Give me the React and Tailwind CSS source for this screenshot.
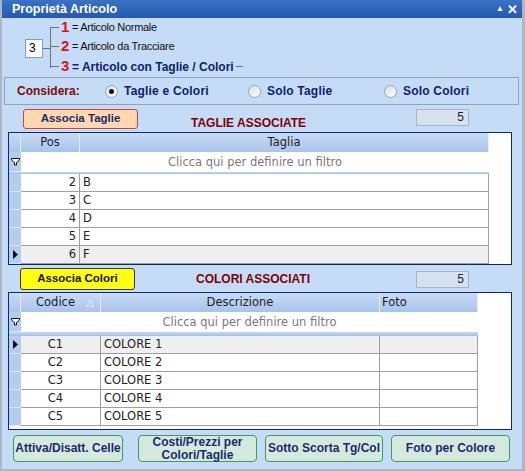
import React from 'react';

const Radio = ({ checked, label }) => (
  <div className="flex items-center gap-[6px]">
    <div className="w-[13px] h-[13px] rounded-full border border-[#9aa6b4] bg-gradient-to-br from-[#d8dde3] to-white flex items-center justify-center">
      {checked && <div className="w-[5px] h-[5px] rounded-full bg-[#111]" />}
    </div>
    <span className="text-[12px] font-bold text-[#13206a] tracking-[0.2px]">{label}</span>
  </div>
);

const Counter = ({ value }) => (
  <div className="w-[53px] h-[17px] bg-[#d6e1ee] border border-[#a6b6c8] text-right pr-[4px] text-[12px] leading-[15px] text-[#222]">
    {value}
  </div>
);

const Funnel = () => (
  <svg width="9" height="9" viewBox="0 0 9 9">
    <path d="M0.5 1.5 H8.5 V3 L5.5 5.5 V8 H3.5 V5.5 L0.5 3 Z" fill="white" stroke="#111" strokeWidth="1" />
  </svg>
);

const Arrow = () => (
  <svg width="5" height="9" viewBox="0 0 5 9">
    <path d="M0 0 L5 4.5 L0 9 Z" fill="#111" />
  </svg>
);

const Grid = ({ columns, rows, selected, height }) => {
  const used = columns.reduce((a, c) => a + c.w, 12);
  return (
    <div className="mx-[6px] w-[504px] border border-[#0b2a6e] bg-white flex flex-col" style={{ height }}>
      {/* header */}
      <div className="flex h-[19px]">
        <div className="w-[12px] bg-gradient-to-b from-[#c8dbf5] to-[#a8c4ec] border-r border-[#e4edf9]" />
        {columns.map((c, i) => (
          <div
            key={i}
            className={`relative bg-gradient-to-b from-[#c8dbf5] to-[#a8c4ec] border-r border-[#e4edf9] text-[11.5px] leading-[19px] text-[#1d1d1d] ${c.hAlign}`}
            style={{ width: c.w }}
          >
            {c.title}
            {c.sort && <span className="absolute right-[6px] top-0 text-[10px] text-[#f2f6fc]">△</span>}
          </div>
        ))}
      </div>
      {/* filter row */}
      <div className="flex h-[20px]">
        <div className="w-[12px] bg-[#b5cdf0] flex items-center justify-center border-b border-[#d8e6f8]">
          <Funnel />
        </div>
        <div className="text-center text-[11.5px] leading-[20px] text-[#7a7a7a]" style={{ width: used - 12 }}>
          Clicca qui per definire un filtro
        </div>
      </div>
      <div className="flex h-[4px]">
        <div className="bg-gradient-to-b from-[#c8dbf5] to-[#9fbde9]" style={{ width: used }} />
      </div>
      {rows.map((r, ri) => (
        <div key={ri} className="flex h-[18px]">
          <div className="w-[12px] bg-[#b5cdf0] border-b border-[#dbe7f8] flex items-center justify-center">
            {ri === selected && <Arrow />}
          </div>
          {columns.map((c, ci) => (
            <div
              key={ci}
              className={`border-r border-b border-[#a0a0a0] text-[11.5px] leading-[17px] text-[#222] truncate ${c.align} ${ri === selected ? 'bg-[#efefef]' : 'bg-white'}`}
              style={{ width: c.w }}
            >
              {r[ci]}
            </div>
          ))}
        </div>
      ))}
    </div>
  );
};

const BottomButton = ({ children, className }) => (
  <button className={`h-[27px] rounded-[4px] border border-[#3d9a5c] bg-[#d5eadf] text-[12px] leading-[13px] font-bold text-[#1b2a6b] flex items-center justify-center text-center ${className}`}>
    {children}
  </button>
);

export default function App() {
  const grid1Cols = [
    { title: 'Pos', w: 59, hAlign: 'text-center', align: 'text-right pr-[3px]' },
    { title: 'Taglia', w: 409, hAlign: 'text-center', align: 'text-left pl-[3px]' },
  ];
  const grid2Cols = [
    { title: 'Codice', w: 80, hAlign: 'text-center pr-[10px]', align: 'text-center pr-[10px]', sort: true },
    { title: 'Descrizione', w: 279, hAlign: 'text-center', align: 'text-left pl-[3px]' },
    { title: 'Foto', w: 98, hAlign: 'text-left pl-[2px]', align: 'text-left' },
  ];

  return (
    <div
      className="w-[525px] h-[471px] bg-[#c5dcf6] border-l-[2px] border-r-[3px] border-b-[2px] border-[#a9b7c8] flex flex-col overflow-hidden relative"
      style={{ fontFamily: '"DejaVu Sans", Verdana, sans-serif' }}
    >
      {/* title bar */}
      <div className="h-[18px] bg-gradient-to-b from-[#3b72c6] to-[#2559ad] flex items-center justify-between pl-[10px] pr-[4px]" style={{ fontFamily: '"Liberation Sans", Arial, sans-serif' }}>
        <span className="text-white font-bold text-[12.5px]">Proprietà Articolo</span>
        <div className="flex items-center gap-[3px] text-white font-bold">
          <span className="text-[8px]">▲</span>
          <span className="text-[13px] leading-none">✕</span>
        </div>
      </div>

      {/* type selector */}
      <div className="h-[59px] flex items-center pl-[23px]" style={{ fontFamily: '"Liberation Sans", Arial, sans-serif' }}>
        <div className="w-[18px] h-[19px] bg-white border border-[#8a9bb0] text-[12px] leading-[17px] pl-[3px] text-black mt-[2px]">3</div>
        <div className="w-[7px] h-px bg-[#6b7684] mt-[2px]" />
        <div className="relative flex flex-col border-l border-transparent">
          <div className="absolute -left-px top-[9px] h-[41px] w-px bg-[#6b7684]" />
          {[
            { n: '1', t: '= Articolo Normale', h: 'h-[19px]', cls: 'text-[11px] text-[#111] tracking-[-0.3px]' },
            { n: '2', t: '= Articolo da Tracciare', h: 'h-[19px]', cls: 'text-[11px] text-[#111] tracking-[-0.3px]' },
            { n: '3', t: '= Articolo con Taglie / Colori', h: 'h-[21px]', cls: 'text-[12px] font-bold text-[#12206a]' },
          ].map((it, i) => (
            <div key={i} className={`flex items-center ${it.h}`}>
              <div className="w-[8px] h-px bg-[#6b7684]" />
              <span className="ml-[2px] text-[15px] font-bold text-[#e0101a] w-[10px]">{it.n}</span>
              <span className={`ml-[1px] ${it.cls}`}>{it.t}</span>
              {i === 2 && <div className="ml-[2px] w-[7px] h-px bg-[#6b7684]" />}
            </div>
          ))}
        </div>
      </div>

      {/* considera */}
      <div className="mx-[2px] mr-[3px] h-[28px] border border-[#8ea3bc] flex items-center" style={{ fontFamily: '"Liberation Sans", Arial, sans-serif' }}>
        <span className="ml-[12px] w-[88px] text-[12px] font-bold text-[#7c0a0a]">Considera:</span>
        <div className="w-[143px]"><Radio checked label="Taglie e Colori" /></div>
        <div className="w-[136px]"><Radio label="Solo Taglie" /></div>
        <Radio label="Solo Colori" />
      </div>

      {/* taglie toolbar */}
      <div className="h-[27px] flex items-center" style={{ fontFamily: '"Liberation Sans", Arial, sans-serif' }}>
        <button className="ml-[21px] w-[115px] h-[20px] rounded-[3px] border border-[#d0404a] bg-[#ffd8b0] text-[11.5px] font-bold text-[#1b2a6b]">
          Associa Taglie
        </button>
        <span className="ml-[53px] mt-[8px] text-[12px] font-bold text-[#800000]">TAGLIE ASSOCIATE</span>
        <div className="ml-auto mr-[53px] -mt-[2px]"><Counter value="5" /></div>
      </div>

      <Grid columns={grid1Cols} selected={4} height={133} rows={[['2', 'B'], ['3', 'C'], ['4', 'D'], ['5', 'E'], ['6', 'F']]} />

      {/* colori toolbar */}
      <div className="h-[27px] flex items-center" style={{ fontFamily: '"Liberation Sans", Arial, sans-serif' }}>
        <button className="ml-[18px] w-[115px] h-[22px] rounded-[3px] border border-[#3a3a1a] bg-[#ffff10] text-[11.5px] font-bold text-[#111]">
          Associa Colori
        </button>
        <span className="ml-[61px] text-[12px] font-bold text-[#800000]">COLORI ASSOCIATI</span>
        <div className="ml-auto mr-[53px] mt-[2px]"><Counter value="5" /></div>
      </div>

      <Grid
        columns={grid2Cols}
        selected={0}
        height={138}
        rows={[['C1', 'COLORE 1', ''], ['C2', 'COLORE 2', ''], ['C3', 'COLORE 3', ''], ['C4', 'COLORE 4', ''], ['C5', 'COLORE 5', '']]}
      />

      {/* bottom buttons */}
      <div className="mt-[5px] ml-[11px] flex" style={{ fontFamily: '"Liberation Sans", Arial, sans-serif' }}>
        <BottomButton className="w-[110px]">Attiva/Disatt. Celle</BottomButton>
        <BottomButton className="w-[119px] ml-[15px]">Costi/Prezzi per<br />Colori/Taglie</BottomButton>
        <BottomButton className="w-[118px] ml-[8px]">Sotto Scorta Tg/Col</BottomButton>
        <BottomButton className="w-[119px] ml-[8px]">Foto per Colore</BottomButton>
      </div>
    </div>
  );
}
